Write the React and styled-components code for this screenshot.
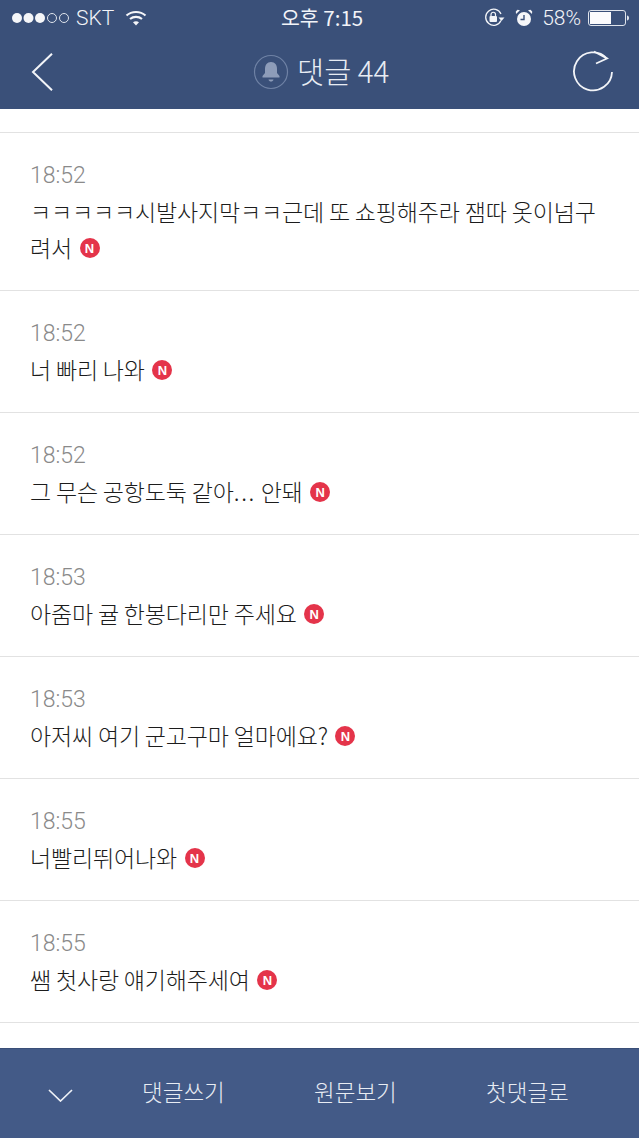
import React from "react";
import styled, { createGlobalStyle } from "styled-components";

const Global = createGlobalStyle`
  html, body { margin: 0; padding: 0; background: #fff; }
  * { box-sizing: border-box; }
`;
const Page = styled.div`
  width: 639px; height: 1138px; display: flex; flex-direction: column; overflow: hidden;
  background: #fff; font-family: "Noto Sans CJK KR", sans-serif;
`;
const Top = styled.header`
  height: 109px; background: #3a5079; color: #fff; flex: none; display: flex; flex-direction: column;
`;
const StatusBar = styled.div`
  height: 35px; padding: 0 9px 0 11px; display: flex; align-items: center; justify-content: space-between;
  position: relative; font-family: Roboto, sans-serif; font-size: 21px; font-weight: 300; color: #f2f4f8;
`;
const StatusSide = styled.div`
  display: flex; align-items: center; gap: ${p => p.$gap}px;
`;
const SignalText = styled.span`
  margin-right: 5px;
`;
const StatusIcons = styled.div`
  display: flex; align-items: center; gap: 10px; margin-right: 2px;
`;
const StatusClock = styled.div`
  position: absolute; left: 281px; top: 3px; font-size: 20.5px; font-weight: 400; line-height: 28px;
  font-family: "Noto Sans CJK KR", sans-serif;
`;
const NavBar = styled.div`
  flex: 1; display: flex; align-items: center; justify-content: space-between; padding: 0 25px 0 30px; position: relative;
`;
const NavTitle = styled.div`
  position: absolute; left: 253px; top: 0; bottom: 0; display: flex; align-items: center; gap: 8px;
  font-size: 29.5px; font-weight: 300; color: #e8ecf3; line-height: 1;
`;
const TitleText = styled.span`
  padding-bottom: 3px;
`;
const Divider = styled.div`
  height: 24px; flex: none; border-bottom: 1px solid #e2e2e2;
`;
const List = styled.div`
  flex: 1; overflow: hidden;
`;
const Row = styled.div`
  padding: 25px 30px 25px; border-bottom: 1px solid #e2e2e2;
`;
const Time = styled.div`
  font-family: Roboto, sans-serif; font-weight: 300; font-size: 23px; line-height: 35px; color: #8a8a8a;
`;
const Message = styled.div`
  font-size: 23px; font-weight: 300; line-height: 36px; color: #1c1c1c; letter-spacing: -0.16px;
`;
const Dotted = styled.span`
  letter-spacing: 1.6px;
`;
const NewBadge = styled.span`
  display: inline-flex; width: 20px; height: 20px; border-radius: 50%; background: #e4344a; color: #fff;
  align-items: center; justify-content: center; font-family: "Liberation Sans", sans-serif;
  font-size: 13px; font-weight: 700; margin: 9px 0 0 7.5px; vertical-align: top; line-height: 1; letter-spacing: 0;
`;
const Bottom = styled.footer`
  height: 90px; flex: none; background: #435a87; display: flex; align-items: center; color: #e8ecf3;
  font-size: 22.5px; font-weight: 300; padding-left: 48px; border-top: 1px solid #3a4f78;
`;
const BottomLabel = styled.div`
  width: ${p => p.$w}px; flex: none; padding-bottom: 6px;
`;
const ChevronWrap = styled.div`
  width: 94px; flex: none; display: flex; align-items: center; padding-top: 4px;
`;

const Dots = () => (
  <svg width="59" height="12" viewBox="0 0 59 12">
    {[6, 17.5, 29].map(x => <circle key={x} cx={x} cy="6" r="5" fill="#f5f6f9" />)}
    {[41, 53].map(x => <circle key={x} cx={x} cy="6" r="4.5" fill="none" stroke="#dfe4ec" strokeWidth="1" />)}
  </svg>
);
const Wifi = () => (
  <svg width="22" height="16" viewBox="0 0 22 16" fill="none" stroke="#f5f6f9" strokeWidth="2.2">
    <path d="M1.500 5.500C6.800.8 15.200.8 20.500 5.500" />
    <path d="M5 9c3.400-2.800 8.600-2.800 12 0" />
    <path d="M11 15.500 8 12.200c1.700-1.300 4.300-1.300 6 0z" fill="#f5f6f9" stroke="none" />
  </svg>
);
const RotationLock = () => (
  <svg width="21" height="19" viewBox="0 0 21 19" fill="none">
    <path d="M17 12.500A8 8 0 1 1 17 6" stroke="#f2f4f8" strokeWidth="1.3" />
    <path d="M14.500 9.500h6l-3 3.400z" fill="#f2f4f8" />
    <rect x="5.500" y="8" width="7.500" height="6" rx="1" fill="#f2f4f8" />
    <path d="M7 8V6.500a2.200 2.200 0 0 1 4.500 0V8" stroke="#f2f4f8" strokeWidth="1.2" />
  </svg>
);
const Alarm = () => (
  <svg width="18" height="18" viewBox="0 0 18 18">
    <circle cx="9" cy="10" r="7" fill="#f5f6f9" />
    <path d="M1 5 5 1.200 2.500.8.8 2.600zM17 5l-4-3.800 2.500-.4 1.700 1.800z" fill="#f5f6f9" />
    <path d="M9 6v4.500H5.500" fill="none" stroke="#3a5079" strokeWidth="1.4" />
  </svg>
);
const Battery = () => (
  <svg width="42" height="16" viewBox="0 0 42 16">
    <rect x=".5" y=".5" width="37" height="15" rx="2.500" fill="none" stroke="#dfe4ec" />
    <rect x="2" y="2" width="21" height="12" fill="#fbfbfd" />
    <path d="M39 5.500c1.200.2 2 1.200 2 2.500s-.8 2.300-2 2.500z" fill="#dfe4ec" />
  </svg>
);
const Back = () => (
  <svg width="24" height="38" viewBox="0 0 24 38" fill="none" stroke="#f2f4f8" strokeWidth="2">
    <path d="M22 .7 3 19l19 18.300" />
  </svg>
);
const Bell = () => (
  <svg width="36" height="36" viewBox="0 0 36 36">
    <circle cx="18" cy="18" r="16.500" fill="none" stroke="#6f82a5" strokeWidth="1.2" />
    <path d="M18 8c-4 0-6 3-6 7v4l-2.500 3v1.500h17V22L24 19v-4c0-4-2-7-6-7z" fill="#8d9cb9" />
    <path d="M15.500 25.500h5c-.4 1.400-1.300 2-2.500 2s-2.100-.6-2.500-2z" fill="#8d9cb9" />
  </svg>
);
const Refresh = () => (
  <svg width="42" height="44" viewBox="0 0 42 44" fill="none" stroke="#f2f4f8" strokeWidth="1.8">
    <path d="M35 8.500A19 19 0 1 0 40 22" />
    <path d="M22 1.500 35 8.500 24 13.500" />
  </svg>
);
const Chevron = () => (
  <svg width="25" height="13" viewBox="0 0 25 13" fill="none" stroke="#eef1f6" strokeWidth="1.7">
    <path d="M1 1l11.500 11L24 1" />
  </svg>
);

const items = [
  ["18:52", "ㅋㅋㅋㅋㅋ시발사지막ㅋㅋ근데 또 쇼핑해주라 잼따 옷이넘구려서"],
  ["18:52", "너 빠리 나와"],
  ["18:52", <>그 무슨 공항도둑 같아<Dotted>...</Dotted> 안돼</>],
  ["18:53", "아줌마 귤 한봉다리만 주세요"],
  ["18:53", "아저씨 여기 군고구마 얼마에요?"],
  ["18:55", "너빨리뛰어나와"],
  ["18:55", "쌤 첫사랑 얘기해주세여"],
];

export default function App() {
  return (
    <Page>
      <Global />
      <Top>
        <StatusBar>
          <StatusSide $gap={6}>
            <Dots />
            <SignalText>SKT</SignalText>
            <Wifi />
          </StatusSide>
          <StatusClock>오후 7:15</StatusClock>
          <StatusSide $gap={7}>
            <StatusIcons>
              <RotationLock />
              <Alarm />
            </StatusIcons>
            <span>58%</span>
            <Battery />
          </StatusSide>
        </StatusBar>
        <NavBar>
          <Back />
          <NavTitle><Bell /><TitleText>댓글 44</TitleText></NavTitle>
          <Refresh />
        </NavBar>
      </Top>
      <Divider />
      <List>
        {items.map(([t, m], i) => (
          <Row key={i}>
            <Time>{t}</Time>
            <Message>{m}<NewBadge>N</NewBadge></Message>
          </Row>
        ))}
      </List>
      <Bottom>
        <ChevronWrap><Chevron /></ChevronWrap>
        <BottomLabel $w={172}>댓글쓰기</BottomLabel>
        <BottomLabel $w={172}>원문보기</BottomLabel>
        <BottomLabel $w={100}>첫댓글로</BottomLabel>
      </Bottom>
    </Page>
  );
}
